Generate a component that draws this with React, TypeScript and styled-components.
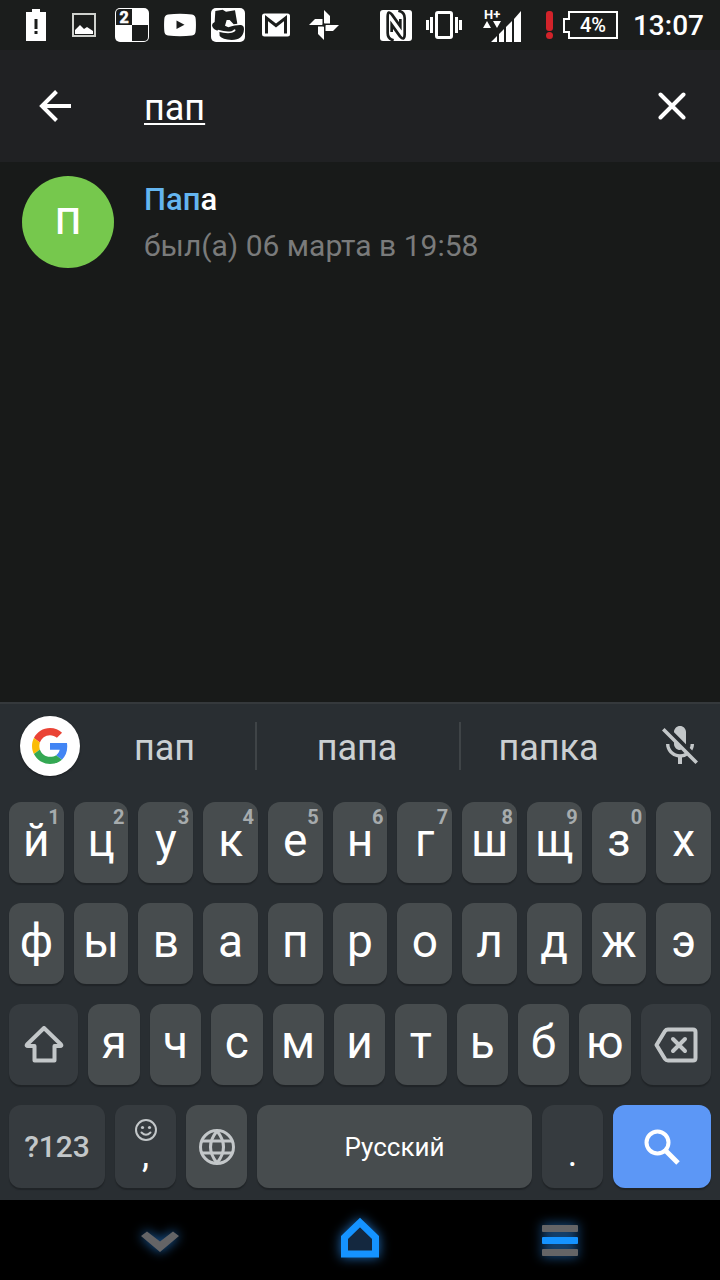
import React, { useState } from "react";
import styled, { createGlobalStyle, css } from "styled-components";

const GlobalStyle = createGlobalStyle`
  *, *::before, *::after { box-sizing: border-box; }
  body { margin: 0; background: #181a19; font-family: Roboto, "Noto Sans", sans-serif; }
  button { border: 0; padding: 0; margin: 0; background: none; font-family: inherit; color: inherit; cursor: pointer; }
  svg { display: block; flex: none; }
`;

const Screen = styled.div`
  display: flex;
  flex-direction: column;
  min-height: 100vh;
  background: #181a19;
  color: #fff;
`;

/* ---------- status bar ---------- */

const StatusBar = styled.header`
  display: flex;
  justify-content: space-between;
  align-items: center;
  height: 50px;
  padding: 0 16px 0 12px;
  background: #1b1d1c;
`;

const StatusGroup = styled.div`
  display: flex;
  align-items: center;
`;

const StatusSlot = styled.span<{ $width?: number }>`
  display: flex;
  justify-content: center;
  width: ${(p) => p.$width ?? 48}px;
`;

const BatteryLevel = styled.span`
  position: relative;
  display: flex;
  align-items: center;
  justify-content: center;
  width: 56px;
  height: 28px;
  padding-left: 4px;
  margin-right: 14px;
  font-size: 20px;
  font-weight: 500;
  line-height: 28px;

  svg { position: absolute; inset: 0; }
`;

const Clock = styled.time`
  padding-top: 2px;
  font-size: 28px;
  font-weight: 500;
  line-height: 34px;
`;

/* ---------- search header ---------- */

const SearchBar = styled.form`
  display: flex;
  align-items: center;
  height: 112px;
  background: #202123;
`;

const IconButton = styled.button`
  display: flex;
  align-items: center;
  justify-content: center;
  width: 96px;
  height: 96px;
`;

const BackButton = styled(IconButton)`
  width: 110px;
`;

const SearchInput = styled.input`
  flex: 1;
  min-width: 0;
  height: 60px;
  margin-left: 34px;
  padding: 4px 0 0;
  border: 0;
  outline: 0;
  background: transparent;
  color: #fff;
  font-family: inherit;
  font-size: 36px;
  line-height: 56px;
  text-decoration: underline;
  text-decoration-thickness: 2px;
  text-underline-offset: 3px;
  text-decoration-skip-ink: none;
`;

/* ---------- results ---------- */

const Results = styled.main`
  flex: 1;
`;

const ResultList = styled.ul`
  margin: 0;
  padding: 0;
  list-style: none;
`;

const ResultLink = styled.a`
  display: flex;
  align-items: center;
  gap: 30px;
  padding: 14px 22px;
  color: inherit;
  text-decoration: none;
`;

const Avatar = styled.span`
  display: flex;
  align-items: center;
  justify-content: center;
  width: 92px;
  height: 92px;
  border-radius: 50%;
  background: #76c84d;
  font-size: 36px;
  font-weight: 500;
`;

const ResultText = styled.span`
  display: flex;
  flex-direction: column;
  gap: 10px;
  padding-top: 2px;
`;

const ResultName = styled.span`
  font-size: 31px;
  font-weight: 500;
  line-height: 36px;
`;

const Match = styled.mark`
  background: none;
  color: #64b5ef;
`;

const LastSeen = styled.span`
  color: #7a7b7b;
  font-size: 30px;
  line-height: 36px;
`;

/* ---------- keyboard ---------- */

const Keyboard = styled.section`
  border-top: 2px solid #35393c;
  background: #292e32;
  padding-bottom: 12px;
`;

const SuggestionBar = styled.div`
  display: grid;
  grid-template-columns: 80px 177fr 204fr 179fr 80px;
  align-items: center;
  height: 84px;
  margin-bottom: 14px;
`;

const GoogleButton = styled.button`
  display: flex;
  align-items: center;
  justify-content: center;
  justify-self: end;
  width: 60px;
  height: 60px;
  border-radius: 50%;
  background: #fff;
  box-shadow: 0 1px 2px #1a1d20;
`;

const Suggestion = styled.button`
  height: 48px;
  padding: 4px 2px 0 0;
  border-right: 2px solid #3f4447;
  color: #cbd0d2;
  font-size: 36px;
  line-height: 44px;

  &:nth-of-type(2) { padding-right: 6px; }
  &:nth-of-type(4) { border-right-color: transparent; }
`;

const MicButton = styled.button`
  display: flex;
  align-items: center;
  justify-content: center;
  color: #c3c7c9;
`;

const KeyRows = styled.div`
  display: flex;
  flex-direction: column;
  gap: 20px;
  padding: 0 9px;
`;

const KeyRow = styled.div<{ $height?: number }>`
  display: flex;
  gap: 10px;
  height: ${(p) => p.$height ?? 81}px;
`;

type Tone = "letter" | "dark" | "action";

const tones: Record<Tone, string> = {
  letter: "#474c4e",
  dark: "#363b3f",
  action: "#5c97f6",
};

const Key = styled.button<{ $grow?: number; $tone?: Tone }>`
  position: relative;
  display: flex;
  align-items: center;
  justify-content: center;
  flex: ${(p) => p.$grow ?? 51} 1 0;
  min-width: 0;
  border-radius: 12px;
  background: ${(p) => tones[p.$tone ?? "letter"]};
  box-shadow: 0 2px 1px #202427;
  color: ${(p) => (p.$tone === "dark" ? "#c3c7c9" : "#fff")};
`;

const LetterKey = styled(Key)`
  padding-bottom: 6px;
  font-size: 46px;
  line-height: 54px;
`;

const Hint = styled.span`
  position: absolute;
  top: 4px;
  right: 4px;
  color: #a6abad;
  font-size: 20px;
  font-weight: 700;
  line-height: 22px;
`;

const SymbolsKey = styled(Key)`
  font-size: 30px;
  font-weight: 500;
`;

const SpaceKey = styled(Key)`
  font-size: 26px;
`;

const punctuation = css`
  color: #fff;
  font-size: 36px;
  line-height: 36px;
`;

const CommaKey = styled(Key)`
  flex-direction: column;
  justify-content: flex-start;
  padding-top: 14px;
`;

const Comma = styled.span`
  ${punctuation}
  margin-top: -4px;
`;

const PeriodKey = styled(Key)`
  ${punctuation}
  padding-top: 14px;
`;

const GlobeKey = styled(Key)`
  color: #c3c7c9;
`;

/* ---------- navigation ---------- */

const NavBar = styled.nav`
  display: flex;
  height: 80px;
  padding: 0 60px;
  background: #000;
`;

const NavButton = styled.button`
  display: flex;
  flex: 1;
  align-items: center;
  justify-content: center;

  svg { filter: drop-shadow(0 0 6px #1f6ab5); overflow: visible; }
`;

/* ---------- icons ---------- */

const BatteryAlertIcon = () => (
  <svg width="20" height="32" viewBox="0 0 20 32" aria-hidden="true">
    <path d="M0 3h6V0h8v3h6v29H0z" fill="#fff" />
    <path d="M8.500 10h3v10h-3zM8.500 22h3v3h-3z" fill="#1b1d1c" />
  </svg>
);

const PictureIcon = () => (
  <svg width="24" height="24" viewBox="0 0 24 24" aria-hidden="true">
    <rect x="1" y="1" width="22" height="22" fill="none" stroke="#cfd1cd" strokeWidth="2" />
    <path d="M3 21v-4l5-5 4 4 3-2 6 4v3z" fill="#fff" />
  </svg>
);

const CheckerIcon = () => (
  <svg width="34" height="34" viewBox="0 0 34 34" aria-hidden="true">
    <rect width="34" height="34" rx="5" fill="#fff" />
    <path d="M1 5a4 4 0 0 1 4-4h12v16H1zM17 17h16v12a4 4 0 0 1-4 4H17z" fill="#1b1d1c" />
    <text x="9" y="15" textAnchor="middle" fill="#fff" stroke="#fff" strokeWidth=".6" fontSize="16" fontWeight="700" fontFamily="Roboto, sans-serif">2</text>
  </svg>
);

const VideoIcon = () => (
  <svg width="32" height="24" viewBox="0 0 32 24" aria-hidden="true">
    <path d="M4 1.500Q16 .2 28 1.500Q31.500 2 31.700 6Q32.200 12 31.700 18Q31.500 22 28 22.500Q16 23.800 4 22.500Q.5 22 .3 18Q-.2 12 .3 6Q.5 2 4 1.500z" fill="#fff" />
    <path d="M12.500 7.500v8.500l8-4.200z" fill="#1b1d1c" />
  </svg>
);

const GenieIcon = () => (
  <svg width="34" height="34" viewBox="0 0 102 102" aria-hidden="true">
    <rect width="102" height="102" rx="15" fill="#fff" />
    <path
      d="M13 9L35 5L45 11L72 7L79 47L68 49L56 36L47 36L42 53L52 58Q76 50 90 51Q99 52 99 64Q97 96 62 96Q34 94 26 84L25 69Q4 66 3 52Q3 46 11 42Z"
      fill="#1b1d1c"
    />
    <path d="M20 68Q48 76 62 72Q70 70 72 65" fill="none" stroke="#fff" strokeWidth="5" />
  </svg>
);

const MailIcon = () => (
  <svg width="28" height="24" viewBox="0 0 28 24" aria-hidden="true">
    <rect y=".5" width="28" height="23" rx="2.500" fill="#fff" />
    <path d="M4.500 20.500V5L14 12.500 23.500 5v15.500" fill="none" stroke="#1b1d1c" strokeWidth="3" />
  </svg>
);

const PinwheelIcon = () => (
  <svg width="30" height="30" viewBox="0 0 30 30" aria-hidden="true">
    <g fill="#fff">
      <path d="M15 0v13.500h6V6z" />
      <path d="M15 0v13.500h6V6z" transform="rotate(90 15 15)" />
      <path d="M15 0v13.500h6V6z" transform="rotate(180 15 15)" />
      <path d="M15 0v13.500h6V6z" transform="rotate(270 15 15)" />
    </g>
    <circle cx="15" cy="15" r="1.500" fill="#1b1d1c" />
  </svg>
);

const NfcIcon = () => (
  <svg width="32" height="31" viewBox="8 11 96 93" aria-hidden="true">
    <rect x="8" y="11" width="96" height="93" rx="9" fill="#fff" />
    <g fill="none" stroke="#1b1d1c" strokeWidth="8">
      <path d="M49 102Q31 98 31 80V30Q32 10 44 25L69 60V38" />
      <path d="M63 13Q82 17 82 35V85Q81 105 68 90L43 55V77" />
    </g>
  </svg>
);

const VibrateIcon = () => (
  <svg width="36" height="28" viewBox="0 0 36 28" aria-hidden="true">
    <rect x="10.500" y="1.500" width="15" height="25" rx="1.500" fill="none" stroke="#fff" strokeWidth="3" />
    <path d="M5.500 6v16M30.500 6v16M1.500 9v10M34.500 9v10" stroke="#fff" strokeWidth="3" />
  </svg>
);

const SignalIcon = () => (
  <svg width="40" height="38" viewBox="0 -2 40 38" overflow="visible" aria-hidden="true">
    <text x="1" y="11" fill="#fff" fontSize="13" fontWeight="700" fontFamily="Roboto, sans-serif">H+</text>
    <path d="M0 20l4-7 4 7zM10 13h8l-4 7z" fill="#fff" />
    <path d="M8 34l6-6v6zM16 26l5-5v13h-5zM23 19l6-6v21h-6zM31 11l7-8v31h-7z" fill="#fff" />
  </svg>
);

const WarningIcon = () => (
  <svg width="8" height="28" viewBox="0 0 8 28" aria-hidden="true">
    <rect width="7" height="20" rx="3" fill="#d2232a" />
    <circle cx="3.500" cy="24.500" r="3.500" fill="#d2232a" />
  </svg>
);

const BatteryFrame = () => (
  <svg width="56" height="28" viewBox="0 0 56 28" aria-hidden="true">
    <path d="M6 1h48v26H6v-6H1V8h5z" fill="none" stroke="#fff" strokeWidth="2" />
  </svg>
);

const BackIcon = () => (
  <svg width="32" height="32" viewBox="0 0 32 32" fill="none" stroke="#fff" strokeWidth="4" aria-hidden="true">
    <path d="M32 16H3M17.500 1.500L3 16l14.500 14.500" />
  </svg>
);

const CloseIcon = () => (
  <svg width="28" height="28" viewBox="0 0 28 28" stroke="#fff" strokeWidth="4" strokeLinecap="round" aria-hidden="true">
    <path d="M2.500 2.500l23 23M25.500 2.500l-23 23" />
  </svg>
);

const GoogleIcon = () => (
  <svg width="36" height="36" viewBox="0 0 48 48" aria-hidden="true">
    <path fill="#ea4335" d="M24 9.500c3.540 0 6.710 1.220 9.210 3.600l6.850-6.850C35.900 2.380 30.470 0 24 0 14.620 0 6.510 5.380 2.560 13.220l7.980 6.190C12.430 13.720 17.740 9.500 24 9.500z" />
    <path fill="#4285f4" d="M46.980 24.550c0-1.570-.15-3.090-.38-4.550H24v9.020h12.940c-.58 2.960-2.260 5.480-4.780 7.180l7.730 6c4.510-4.180 7.090-10.360 7.090-17.650z" />
    <path fill="#fbbc05" d="M10.530 28.590c-.48-1.450-.76-2.990-.76-4.590s.27-3.140.76-4.590l-7.980-6.190C.92 16.460 0 20.120 0 24s.92 7.540 2.560 10.780l7.970-6.190z" />
    <path fill="#34a853" d="M24 48c6.480 0 11.930-2.130 15.890-5.810l-7.730-6c-2.150 1.450-4.920 2.300-8.160 2.300-6.260 0-11.570-4.220-13.470-9.910l-7.980 6.190C6.510 42.620 14.620 48 24 48z" />
  </svg>
);

const MicOffIcon = () => (
  <svg width="48" height="48" viewBox="0 0 24 24" fill="currentColor" aria-hidden="true">
    <path d="M19 11h-1.700c0 .74-.16 1.430-.43 2.050l1.230 1.230c.56-.98.900-2.090.900-3.280zM14.980 11.170c0-.06.020-.11.020-.17V5c0-1.660-1.340-3-3-3S9 3.340 9 5v.18l5.980 5.990zM4.270 3L3 4.270l6.010 6.010V11c0 1.660 1.330 3 2.990 3 .22 0 .44-.03.650-.08l1.660 1.660c-.71.33-1.500.520-2.310.520-2.760 0-5.300-2.100-5.300-5.100H5c0 3.410 2.720 6.230 6 6.720V21h2v-3.280c.91-.13 1.770-.45 2.540-.9L19.730 21 21 19.730 4.270 3z" />
  </svg>
);

const ShiftIcon = () => (
  <svg width="40" height="38" viewBox="0 1 40 38" fill="none" stroke="currentColor" strokeWidth="4" strokeLinejoin="round" aria-hidden="true">
    <path d="M20 3L37 19.500Q38 21 36 21H30.500V35.500H10.500V21H4Q2 21 3 19.500Z" />
  </svg>
);

const BackspaceIcon = () => (
  <svg width="44" height="36" viewBox="0 0 44 36" fill="none" stroke="currentColor" strokeWidth="4" strokeLinejoin="round" aria-hidden="true">
    <path d="M14 2.500H39Q41.500 2.500 41.500 5V31Q41.500 33.500 39 33.500H14Q12 33.500 11 32L2.500 18L11 4Q12 2.500 14 2.500Z" />
    <path d="M19 12l12 12M31 12L19 24" strokeLinecap="round" />
  </svg>
);

const SmileIcon = () => (
  <svg width="22" height="22" viewBox="0 0 22 22" fill="none" stroke="currentColor" strokeWidth="2" aria-hidden="true">
    <circle cx="11" cy="11" r="10" />
    <path d="M6.500 13.500Q11 18 15.500 13.500" strokeLinecap="round" />
    <circle cx="7.500" cy="8.500" r="1.600" fill="currentColor" stroke="none" />
    <circle cx="14.500" cy="8.500" r="1.600" fill="currentColor" stroke="none" />
  </svg>
);

const GlobeIcon = () => (
  <svg width="36" height="36" viewBox="0 0 36 36" fill="none" stroke="currentColor" strokeWidth="3" aria-hidden="true">
    <circle cx="18" cy="18" r="16.500" />
    <path d="M3 12h30M3 24h30" />
    <path d="M18 2Q5 18 18 34Q31 18 18 2Z" />
  </svg>
);

const SearchIcon = () => (
  <svg width="36" height="36" viewBox="0 0 36 36" fill="none" stroke="currentColor" aria-hidden="true">
    <circle cx="13.500" cy="13.500" r="11" strokeWidth="4" />
    <path d="M22 22L34 34" strokeWidth="5" />
  </svg>
);

const HideKeyboardIcon = () => (
  <svg width="40" height="42" viewBox="0 0 40 42" aria-hidden="true">
    <path d="M1 17L7 12.500 20 22.500 33 12.500 39 17 20 33z" fill="#646466" />
  </svg>
);

const HomeIcon = () => (
  <svg width="40" height="42" viewBox="0 2 40 42" aria-hidden="true">
    <path d="M4.500 37V20.500L20 5.500 35.500 20.500V37z" fill="#14283f" stroke="#1593ff" strokeWidth="7" />
  </svg>
);

const RecentsIcon = () => (
  <svg width="36" height="30" viewBox="0 0 36 30" aria-hidden="true">
    <rect width="36" height="7" rx="1" fill="#646466" />
    <rect y="12" width="36" height="7" rx="1" fill="#1593ff" />
    <rect y="24" width="36" height="7" rx="1" fill="#646466" />
  </svg>
);

/* ---------- data ---------- */

const suggestions = ["пап", "папа", "папка"];
const topRow = [..."йцукенгшщзх"];
const homeRow = [..."фывапролджэ"];
const lowerRow = [..."ячсмитьбю"];
const hints = [..."1234567890"];

export default function App() {
  const [query, setQuery] = useState("пап");
  const type = (s: string) => setQuery((q) => q + s);

  return (
    <Screen>
      <GlobalStyle />
      <StatusBar>
        <StatusGroup>
          <StatusSlot><BatteryAlertIcon /></StatusSlot>
          <StatusSlot><PictureIcon /></StatusSlot>
          <StatusSlot><CheckerIcon /></StatusSlot>
          <StatusSlot><VideoIcon /></StatusSlot>
          <StatusSlot><GenieIcon /></StatusSlot>
          <StatusSlot><MailIcon /></StatusSlot>
          <StatusSlot><PinwheelIcon /></StatusSlot>
        </StatusGroup>
        <StatusGroup>
          <StatusSlot><NfcIcon /></StatusSlot>
          <StatusSlot><VibrateIcon /></StatusSlot>
          <StatusSlot $width={70}><SignalIcon /></StatusSlot>
          <StatusSlot $width={25}><WarningIcon /></StatusSlot>
          <BatteryLevel><BatteryFrame />4%</BatteryLevel>
          <Clock>13:07</Clock>
        </StatusGroup>
      </StatusBar>

      <SearchBar role="search" onSubmit={(e) => e.preventDefault()}>
        <BackButton type="button" aria-label="Назад"><BackIcon /></BackButton>
        <SearchInput
          type="text"
          aria-label="Поиск"
          value={query}
          onChange={(e) => setQuery(e.target.value)}
        />
        <IconButton type="button" aria-label="Очистить" onClick={() => setQuery("")}><CloseIcon /></IconButton>
      </SearchBar>

      <Results>
        <ResultList>
          <li>
            <ResultLink href="#papa">
              <Avatar aria-hidden="true">П</Avatar>
              <ResultText>
                <ResultName><Match>Пап</Match>а</ResultName>
                <LastSeen>был(а) 06 марта в 19:58</LastSeen>
              </ResultText>
            </ResultLink>
          </li>
        </ResultList>
      </Results>

      <Keyboard aria-label="Клавиатура">
        <SuggestionBar>
          <GoogleButton type="button" aria-label="Google"><GoogleIcon /></GoogleButton>
          {suggestions.map((s) => (
            <Suggestion key={s} type="button" onClick={() => setQuery(s)}>{s}</Suggestion>
          ))}
          <MicButton type="button" aria-label="Голосовой ввод"><MicOffIcon /></MicButton>
        </SuggestionBar>
        <KeyRows>
          <KeyRow>
            {topRow.map((c, i) => (
              <LetterKey key={c} type="button" onClick={() => type(c)}>
                {c}
                {hints[i] && <Hint>{hints[i]}</Hint>}
              </LetterKey>
            ))}
          </KeyRow>
          <KeyRow>
            {homeRow.map((c) => (
              <LetterKey key={c} type="button" onClick={() => type(c)}>{c}</LetterKey>
            ))}
          </KeyRow>
          <KeyRow>
            <Key type="button" $grow={69} $tone="dark" aria-label="Shift"><ShiftIcon /></Key>
            {lowerRow.map((c) => (
              <LetterKey key={c} type="button" onClick={() => type(c)}>{c}</LetterKey>
            ))}
            <Key type="button" $grow={70} $tone="dark" aria-label="Удалить" onClick={() => setQuery((q) => q.slice(0, -1))}>
              <BackspaceIcon />
            </Key>
          </KeyRow>
          <KeyRow $height={83}>
            <SymbolsKey type="button" $grow={96} $tone="dark">?123</SymbolsKey>
            <CommaKey type="button" $grow={61} $tone="dark" onClick={() => type(",")}>
              <SmileIcon />
              <Comma>,</Comma>
            </CommaKey>
            <GlobeKey type="button" $grow={61} aria-label="Сменить язык"><GlobeIcon /></GlobeKey>
            <SpaceKey type="button" $grow={275} onClick={() => type(" ")}>Русский</SpaceKey>
            <PeriodKey type="button" $grow={61} $tone="dark" onClick={() => type(".")}>.</PeriodKey>
            <Key type="button" $grow={98} $tone="action" aria-label="Найти"><SearchIcon /></Key>
          </KeyRow>
        </KeyRows>
      </Keyboard>

      <NavBar aria-label="Навигация">
        <NavButton type="button" aria-label="Скрыть клавиатуру"><HideKeyboardIcon /></NavButton>
        <NavButton type="button" aria-label="Домой"><HomeIcon /></NavButton>
        <NavButton type="button" aria-label="Недавние"><RecentsIcon /></NavButton>
      </NavBar>
    </Screen>
  );
}
